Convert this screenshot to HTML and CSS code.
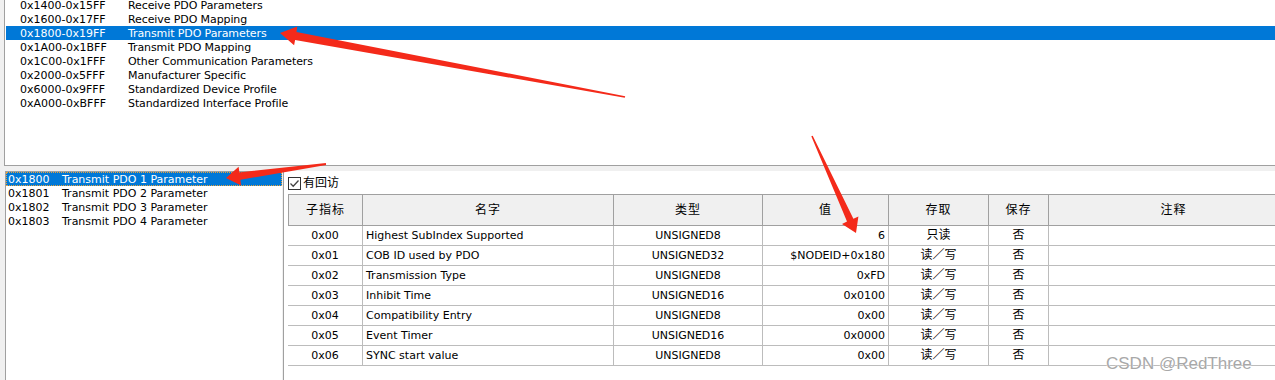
FILE: index.html
```html
<!DOCTYPE html>
<html>
<head>
<meta charset="utf-8">
<link rel="stylesheet" href="styles.css">
</head>
<body>
<div class="top">
  <div class="range-list">
    <div class="range"><span class="code">0x1400-0x15FF</span><span>Receive PDO Parameters</span></div>
    <div class="range"><span class="code">0x1600-0x17FF</span><span>Receive PDO Mapping</span></div>
    <div class="range sel"><span class="code">0x1800-0x19FF</span><span>Transmit PDO Parameters</span></div>
    <div class="range"><span class="code">0x1A00-0x1BFF</span><span>Transmit PDO Mapping</span></div>
    <div class="range"><span class="code">0x1C00-0x1FFF</span><span>Other Communication Parameters</span></div>
    <div class="range"><span class="code">0x2000-0x5FFF</span><span>Manufacturer Specific</span></div>
    <div class="range"><span class="code">0x6000-0x9FFF</span><span>Standardized Device Profile</span></div>
    <div class="range"><span class="code">0xA000-0xBFFF</span><span>Standardized Interface Profile</span></div>
  </div>
</div>
<div class="bottom">
  <div class="objlist">
    <div class="obj sel"><span class="idx">0x1800</span><span>Transmit PDO 1 Parameter</span></div>
    <div class="obj"><span class="idx">0x1801</span><span>Transmit PDO 2 Parameter</span></div>
    <div class="obj"><span class="idx">0x1802</span><span>Transmit PDO 3 Parameter</span></div>
    <div class="obj"><span class="idx">0x1803</span><span>Transmit PDO 4 Parameter</span></div>
  </div>
  <div class="detail">
    <div class="checkrow">
      <svg class="checkbox" width="13" height="13" viewBox="0 0 13 13"><rect x="0.5" y="0.5" width="12" height="12" fill="#fff" stroke="#333"/><path d="M2.5 6.5 L5.2 9.2 L10.5 3.5" fill="none" stroke="#444" stroke-width="1.3"/></svg>
      <span class="cjk">有回访</span>
    </div>
    <div class="grid">
      <div class="row head">
        <div class="c c1 first">子指标</div><div class="c c2">名字</div><div class="c c3">类型</div><div class="c c4">值</div><div class="c c5">存取</div><div class="c c6">保存</div><div class="c c7">注释</div>
      </div>
      <div class="row">
        <div class="c c1">0x00</div><div class="c c2 l">Highest SubIndex Supported</div><div class="c c3">UNSIGNED8</div><div class="c c4 r">6</div><div class="c c5">只读</div><div class="c c6">否</div><div class="c c7"></div>
      </div>
      <div class="row">
        <div class="c c1">0x01</div><div class="c c2 l">COB ID used by PDO</div><div class="c c3">UNSIGNED32</div><div class="c c4 r">$NODEID+0x180</div><div class="c c5">读／写</div><div class="c c6">否</div><div class="c c7"></div>
      </div>
      <div class="row">
        <div class="c c1">0x02</div><div class="c c2 l">Transmission Type</div><div class="c c3">UNSIGNED8</div><div class="c c4 r">0xFD</div><div class="c c5">读／写</div><div class="c c6">否</div><div class="c c7"></div>
      </div>
      <div class="row">
        <div class="c c1">0x03</div><div class="c c2 l">Inhibit Time</div><div class="c c3">UNSIGNED16</div><div class="c c4 r">0x0100</div><div class="c c5">读／写</div><div class="c c6">否</div><div class="c c7"></div>
      </div>
      <div class="row">
        <div class="c c1">0x04</div><div class="c c2 l">Compatibility Entry</div><div class="c c3">UNSIGNED8</div><div class="c c4 r">0x00</div><div class="c c5">读／写</div><div class="c c6">否</div><div class="c c7"></div>
      </div>
      <div class="row">
        <div class="c c1">0x05</div><div class="c c2 l">Event Timer</div><div class="c c3">UNSIGNED16</div><div class="c c4 r">0x0000</div><div class="c c5">读／写</div><div class="c c6">否</div><div class="c c7"></div>
      </div>
      <div class="row">
        <div class="c c1">0x06</div><div class="c c2 l">SYNC start value</div><div class="c c3">UNSIGNED8</div><div class="c c4 r">0x00</div><div class="c c5">读／写</div><div class="c c6">否</div><div class="c c7"></div>
      </div>
    </div>
  </div>
</div>
<svg class="arrows" width="1275" height="380" viewBox="0 0 1275 380">
  <polygon fill="#f42a1a" points="280,33 297.3,26.6 296.5,32.1 625.2,96.2 624.8,97.8 295.1,39.9 294.1,45.3"/>
  <polygon fill="#f42a1a" points="226,178 238.6,166.8 239.4,172.4 325.9,163.0 326.1,165.0 240.4,179.8 241.1,185.4"/>
  <polygon fill="#f42a1a" points="856,233 842.0,224.0 847.0,221.6 811.3,136.3 812.7,135.7 853.4,218.7 858.4,216.4"/>
</svg>
<div class="watermark">CSDN @RedThree</div>
</body>
</html>
```
FILE: styles.css
```css
* { box-sizing: border-box; margin: 0; padding: 0; }
html, body { width: 1275px; height: 380px; overflow: hidden; }
body {
  background: #f0f0f0;
  font-family: "DejaVu Sans", "Noto Sans CJK SC", sans-serif;
  font-size: 11px;
  color: #000;
  position: relative;
}
.top {
  margin-left: 4px;
  height: 166px;
  background: #fff;
  border-left: 1px solid #a0a0a0;
  border-bottom: 1px solid #a0a0a0;
  overflow: hidden;
}
.range-list { margin-top: -2px; padding-left: 1px; }
.range { display: flex; height: 14px; line-height: 16px; white-space: nowrap; letter-spacing: -0.1px; }
.range .code { width: 122px; padding-left: 14px; letter-spacing: 0; }
.sel { background: #0078d7; color: #fff; }

.bottom { display: flex; height: 214px; padding-top: 5px; }
.objlist {
  margin-left: 5px;
  width: 277px;
  margin-right: 1px;
  background: #fff;
  border-left: 1px solid #a0a0a0;
  border-top: 1px solid #a0a0a0;
}
.obj { display: flex; height: 14px; line-height: 15px; white-space: nowrap; padding-left: 2px; }
.obj .idx { width: 54px; }
.obj.sel { outline: 1px dotted #e8a33b; outline-offset: -1px; }

.detail {
  flex: 1;
  background: #fff;
  border-left: 1px solid #a0a0a0;
  padding-left: 4px;
  overflow: hidden;
}
.checkrow { display: flex; align-items: center; height: 23px; gap: 2px; padding-top: 1px; }
.checkbox { display: block; }
.cjk { font-size: 12px; line-height: 14px; }

.grid { width: 1100px; }
.row { display: flex; height: 20px; line-height: 19px; white-space: nowrap; }
.c {
  flex: none;
  text-align: center;
  border-right: 1px solid #bcbcbc;
  border-bottom: 1px solid #bcbcbc;
  overflow: hidden;
}
.c1 { width: 75px; }
.c2 { width: 251px; }
.c3 { width: 149px; }
.c4 { width: 126px; }
.c5 { width: 100px; }
.c6 { width: 60px; }
.c7 { width: 250px; }
.l { text-align: left; padding-left: 3px; }
.r { text-align: right; padding-right: 3px; }
.head { height: 32px; line-height: 30px; background: #f0f0f0; }
.head .c {
  font-size: 12px;
  letter-spacing: 1px;
  border-top: 1px solid #a0a0a0;
  border-bottom: 1px solid #a0a0a0;
  border-right-color: #a0a0a0;
}
.head .first { border-left: 1px solid #a0a0a0; }
.c5, .c6 { font-size: 12px; }

.arrows { position: absolute; left: 0; top: 0; pointer-events: none; }
.watermark {
  position: absolute;
  left: 1106px;
  top: 355px;
  font-family: "Liberation Sans", sans-serif;
  font-size: 17px;
  line-height: 17px;
  color: #a8a8a8;
  text-shadow: 0 0 1px #fff, 0 0 1px #fff;
  white-space: nowrap;
}
```
